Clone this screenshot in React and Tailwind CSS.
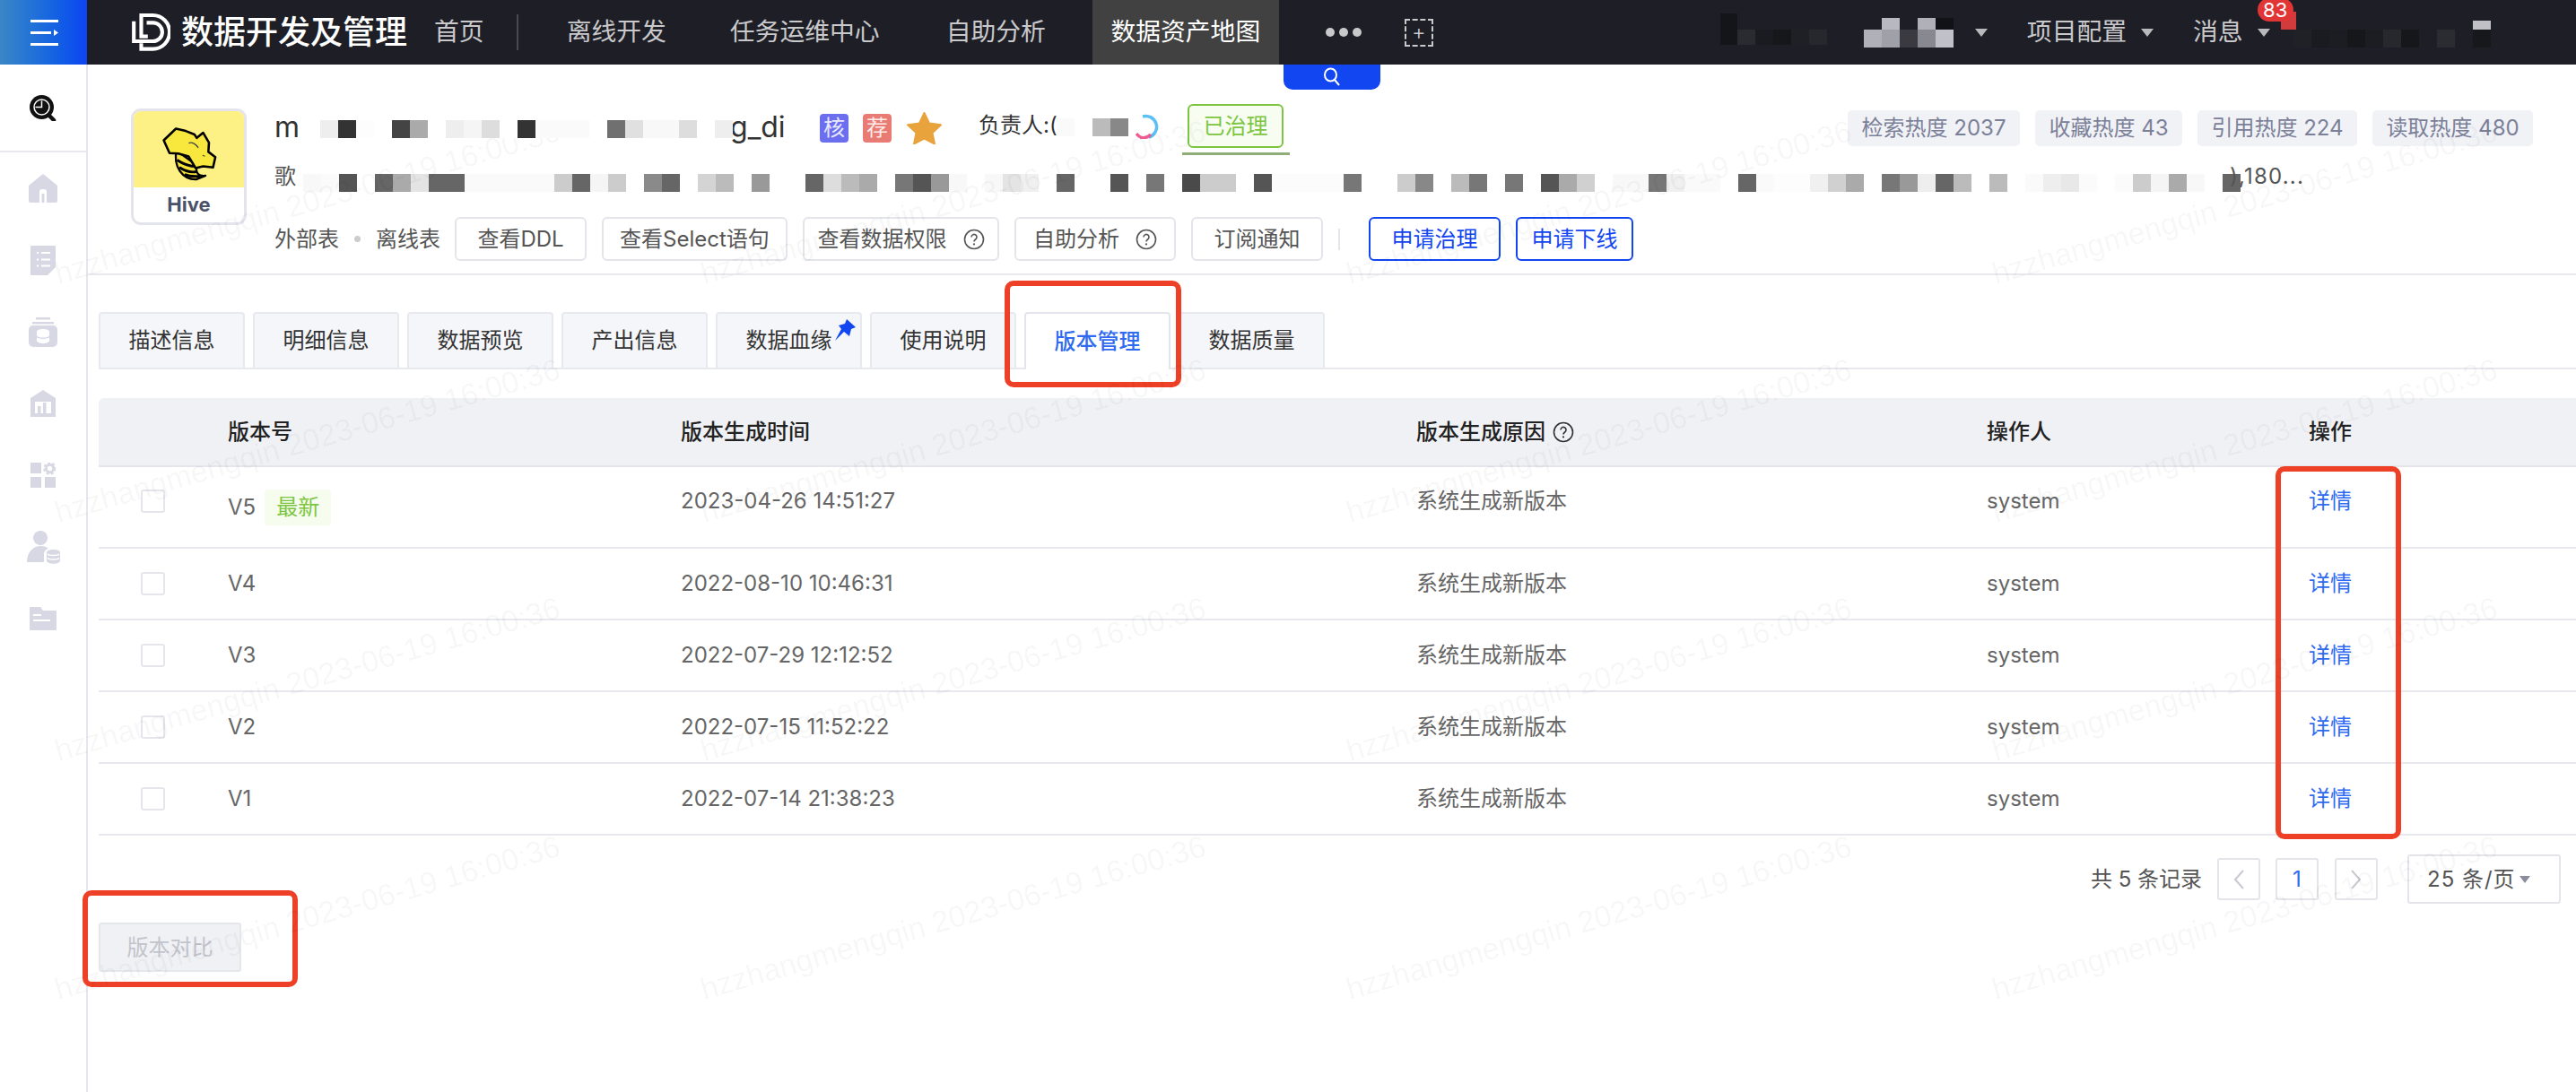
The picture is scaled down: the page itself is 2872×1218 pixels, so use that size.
import React from 'react';

const F = 'font-[Inter,"Noto_Sans_CJK_SC",sans-serif]';

const titleCells = ['#eee','#333','#fdfdfd','#fff','#444','#aaa','#fff','#eee','#f5f5f5','#ddd','#fff','#333','#fafafa','#fafafa','#fafafa','#fff','#707070','#e0e0e0','#f8f8f8','#f8f8f8','#ddd','#fff','#eee'];
const descCells = ['#f8f8f8','#fbfbfb','#555','#fff','#666','#aaa','#e4e4e4','#666','#666','#fafafa','#fafafa','#fafafa','#fafafa','#fafafa','#ccc','#666','#f5f5f5','#ccc','#fff','#8a8a8a','#666','#fff','#d4d4d4','#bbb','#fff','#999','#fff','#fff','#666','#ddd','#bbb','#aaa','#fff','#777','#555','#999','#f8f8f8','#fff','#f8f8f8','#e4e4e4','#f0f0f0','#fff','#666','#fff','#fff','#555','#fff','#777','#fff','#4a4a4a','#ccc','#ccc','#fff','#555','#fcfcfc','#fcfcfc','#fcfcfc','#fcfcfc','#777','#fff','#fff','#ccc','#888','#fff','#bbb','#777','#fff','#777','#fff','#555','#aaa','#d0d0d0','#fff','#f8f8f8','#f8f8f8','#777','#f0f0f0','#fafafa','#fafafa','#fff','#666','#fafafa','#fdfdfd','#fdfdfd','#f0f0f0','#d0d0d0','#aaa','#fff','#777','#999','#eee','#666','#bbb','#fff','#bbb','#fff','#fafafa','#eee','#e8e8e8','#fbfbfb','#fff','#fbfbfb','#ccc','#f5f5f5','#aaa','#f8f8f8','#fff','#666'];

function Cells({ colors, className = '' }) {
  return (
    <div className={`flex shrink-0 ${className}`}>
      {colors.map((c, i) => (
        <div key={i} className="h-[20px] w-[20px]" style={{ backgroundColor: c }} />
      ))}
    </div>
  );
}

function Tri({ className = '' }) {
  return (
    <svg width="14" height="9" viewBox="0 0 14 9" className={className}>
      <path d="M0 0H14L7 9Z" fill="#b9b9bd" />
    </svg>
  );
}

function Help({ color = '#555' }) {
  return (
    <svg width="24" height="24" viewBox="0 0 24 24" fill="none" className="shrink-0">
      <circle cx="12" cy="12" r="10.5" stroke={color} strokeWidth="1.6" />
      <path d="M9 9.5a3 3 0 1 1 4.6 2.5c-1 .7-1.6 1.2-1.6 2.4" stroke={color} strokeWidth="1.6" />
      <circle cx="12" cy="17.4" r="1.1" fill={color} />
    </svg>
  );
}

function Logo() {
  return (
    <svg width="44" height="44" viewBox="45 27 138 137" fill="none" stroke="#fff" strokeWidth="13" className="shrink-0">
      <path d="M81 134V154H122A58 59 0 0 0 122 36H81V110H104" />
      <path d="M55 57V127H122A32 32 0 0 0 122 62H100" />
    </svg>
  );
}

function HiveLogo() {
  return (
    <svg width="64" height="64" viewBox="175 122 198 190" className="shrink-0">
      <path d="M230 208C218 262 250 308 298 307L330 294C308 298 294 286 300 258Z" fill="#f5e23a" stroke="#000" strokeWidth="7" strokeLinejoin="round" />
      <path d="M232 240C256 256 278 262 298 262M240 266C262 280 282 284 300 280M258 290C276 298 292 298 312 296" fill="none" stroke="#000" strokeWidth="9" />
      <path d="M186 172L228 132L262 140L292 152L300 164L322 146L342 180L340 212L364 230L356 266L322 262L296 268L272 228L236 218L206 216Z" fill="#f8e83e" stroke="#000" strokeWidth="8" strokeLinejoin="round" />
      <path d="M272 182C285 176 300 188 305 198M320 224l8 3" fill="none" stroke="#444" strokeWidth="4" />
    </svg>
  );
}

const G = '#d8d8e4';

function IconSearch() {
  return (
    <svg width="30" height="29" viewBox="0 0 30 29" className="shrink-0">
      <circle cx="13.5" cy="13.5" r="13.5" fill="#111" />
      <path d="M21 22l6 6" stroke="#111" strokeWidth="4.5" strokeLinecap="round" />
      <circle cx="13.5" cy="13.5" r="8.5" fill="none" stroke="#fff" strokeWidth="1.5" />
      <path d="M13.5 6.5v7H6.5" fill="none" stroke="#fff" strokeWidth="1.5" />
    </svg>
  );
}
function IconHome() {
  return (
    <svg width="32" height="32" viewBox="0 0 32 32" className="shrink-0">
      <path d="M16 0L32 13V30Q32 32 30 32H2Q0 32 0 30V13Z" fill={G} />
      <path d="M12 32V20Q12 17 15 17H17Q20 17 20 20V32" fill="#fff" />
      <rect x="14.5" y="22" width="3" height="10" rx="1" fill={G} />
    </svg>
  );
}
function IconDoc() {
  return (
    <svg width="28" height="33" viewBox="0 0 28 33" className="shrink-0">
      <path d="M1 0H27Q28 0 28 1V24L19 33H1Q0 33 0 32V1Q0 0 1 0Z" fill={G} />
      <path d="M7 8H9M7 15.5H9M7 22.5H9M12 8H22M12 15.5H22M12 22.5H22" stroke="#fff" strokeWidth="2" />
    </svg>
  );
}
function IconJar() {
  return (
    <svg width="32" height="33" viewBox="0 0 32 33" className="shrink-0">
      <rect x="8" y="0" width="16" height="2.5" fill={G} />
      <rect x="4" y="5" width="24" height="2.5" fill={G} />
      <rect x="0" y="9" width="32" height="24" rx="5" fill={G} />
      <path d="M9 16C9 12 23 12 23 16V26C23 30 9 30 9 26Z" fill="#fff" />
      <path d="M9 21C10 24 22 24 23 21" fill="none" stroke={G} strokeWidth="1.5" />
    </svg>
  );
}
function IconBank() {
  return (
    <svg width="28" height="30" viewBox="0 0 28 30" className="shrink-0">
      <path d="M14 0L28 9V30H0V9Z" fill={G} />
      <rect x="5" y="13" width="18" height="14" fill="#fff" />
      <path d="M8 26V18h3.5v8M14 26V14h3.5v12" fill={G} />
      <rect x="5" y="26" width="18" height="1.5" fill={G} />
    </svg>
  );
}
function IconGrid() {
  return (
    <svg width="28" height="28" viewBox="0 0 28 28" className="shrink-0">
      <rect x="0" y="0" width="12" height="12" fill={G} />
      <rect x="0" y="16" width="12" height="12" fill={G} />
      <rect x="16" y="16" width="12" height="12" fill={G} />
      <circle cx="21.5" cy="6.5" r="4.2" fill="none" stroke={G} strokeWidth="3" />
      <circle cx="21.5" cy="6.5" r="6.3" fill="none" stroke={G} strokeWidth="2" strokeDasharray="3 2.3" />
    </svg>
  );
}
function IconPerson() {
  return (
    <svg width="37" height="37" viewBox="0 0 37 37" className="shrink-0">
      <circle cx="15" cy="8" r="8" fill={G} />
      <path d="M0 35C0 24 7 17 15 17C19 17 22 18 24 20C20 21 19 24 19 27V35Z" fill={G} />
      <path d="M22 24C22 20 37 20 37 24V33C37 38 22 38 22 33Z" fill={G} />
      <path d="M23 26C25 28 34 28 36 26M23 30.5C25 32.5 34 32.5 36 30.5" fill="none" stroke="#fff" strokeWidth="1.5" />
    </svg>
  );
}
function IconFolder() {
  return (
    <svg width="30" height="26" viewBox="0 0 30 26" className="shrink-0">
      <path d="M1 0H12L15 4H29Q30 4 30 5V25Q30 26 29 26H1Q0 26 0 25V1Q0 0 1 0Z" fill={G} />
      <path d="M4 9H13M4 15H23" stroke="#fff" strokeWidth="2" />
    </svg>
  );
}

const sideIcons = [IconHome, IconDoc, IconJar, IconBank, IconGrid, IconPerson, IconFolder];

const tabs = ['描述信息', '明细信息', '数据预览', '产出信息', '数据血缘', '使用说明', '版本管理', '数据质量'];
const rows = [
  ['V5', '2023-04-26 14:51:27'],
  ['V4', '2022-08-10 10:46:31'],
  ['V3', '2022-07-29 12:12:52'],
  ['V2', '2022-07-15 11:52:22'],
  ['V1', '2022-07-14 21:38:23'],
];
const tableCols = 'grid grid-cols-[144px_505px_820px_636px_359px_1fr] items-center';

function Ghost({ children, w }) {
  return (
    <button className={`flex h-[49px] items-center justify-center gap-[18px] rounded-[6px] border-2 border-[#e4e5ea] text-[24px] text-[#555] ${w}`}>
      {children}
    </button>
  );
}
function Heat({ children, w }) {
  return (
    <div className={`flex h-[40px] items-center justify-center rounded-[5px] bg-[#f1f2f6] text-[24px] text-[#7b8099] ${w}`}>{children}</div>
  );
}
function Pager({ children, className = '' }) {
  return (
    <div className={`flex h-[47px] w-[48px] items-center justify-center rounded-[3px] border-2 border-[#e4e5ea] ${className}`}>{children}</div>
  );
}

export default function App() {
  return (
    <div className={`relative h-[1218px] w-[2872px] overflow-hidden bg-white ${F}`}>
      <header className="flex h-[72px] items-stretch bg-[#1e1f26] text-[27.8px] leading-none text-[#c9c9cc]">
        <div className="flex w-[97px] shrink-0 items-center justify-center bg-gradient-to-r from-[#3a86c6] to-[#1043f2]">
          <svg width="32" height="32" viewBox="0 0 32 32">
            <path d="M1 2H32V5H1ZM1 15H24V18H1ZM1 28H32V31H1Z" fill="#fff" />
            <path d="M27 13L32 16.5L27 20Z" fill="#fff" />
          </svg>
        </div>
        <div className="ml-[49px] flex items-center"><Logo /></div>
        <div className="ml-[12px] flex items-center text-[36px] font-medium text-white">数据开发及管理</div>
        <div className="ml-[30px] flex items-center">首页</div>
        <div className="ml-[36px] my-[16px] w-[2px] bg-[#4a4b52]" />
        <div className="ml-[54px] flex items-center">离线开发</div>
        <div className="ml-[71px] flex items-center">任务运维中心</div>
        <div className="ml-[74px] flex items-center">自助分析</div>
        <div className="ml-[52px] flex w-[208px] items-center justify-center bg-[#414141] text-white">数据资产地图</div>
        <div className="ml-[52px] flex items-center gap-[5px]">
          <span className="h-[10px] w-[10px] rounded-full bg-[#c9c9cc]" />
          <span className="h-[10px] w-[10px] rounded-full bg-[#c9c9cc]" />
          <span className="h-[10px] w-[10px] rounded-full bg-[#c9c9cc]" />
        </div>
        <div className="ml-[48px] flex items-center">
          <div className="flex h-[31px] w-[32px] items-center justify-center border-2 border-dashed border-[#c9c9cc] text-[24px] font-light leading-none">+</div>
        </div>
        <div className="ml-[320px] flex items-start pt-[15px]">
          <div className="h-[35px] w-[19px] bg-[#141519]" />
          <div className="mt-[18px] flex">
            <div className="h-[17px] w-[20px] bg-[#2a2b31]" />
            <div className="h-[17px] w-[20px] bg-[#1a1b20]" />
            <div className="h-[17px] w-[20px] bg-[#16171b]" />
            <div className="h-[17px] w-[20px] bg-[#1f2026]" />
            <div className="h-[17px] w-[20px] bg-[#27282e]" />
          </div>
        </div>
        <div className="ml-[41px] flex w-[100px] flex-col justify-start pt-[20px]">
          <div className="flex h-[13px]">
            <div className="h-full w-[20px]" />
            <div className="h-full w-[20px] bg-[#b8b8c0]" />
            <div className="h-full w-[20px]" />
            <div className="h-full w-[20px] bg-[#b0b0b8]" />
            <div className="h-full w-[20px] bg-[#111216]" />
          </div>
          <div className="flex h-[20px]">
            <div className="h-full w-[20px] bg-[#b0b0b8]" />
            <div className="h-full w-[20px] bg-[#a0a0a8]" />
            <div className="h-full w-[20px] bg-[#3a3a40]" />
            <div className="h-full w-[20px] bg-[#888890]" />
            <div className="h-full w-[20px] bg-[#c0c0c8]" />
          </div>
        </div>
        <div className="ml-[24px] flex items-center"><Tri /></div>
        <div className="ml-[44px] flex items-center">项目配置</div>
        <div className="ml-[16px] flex items-center"><Tri /></div>
        <div className="ml-[44px] flex items-center">消息</div>
        <div className="relative ml-[16px] flex items-center">
          <Tri />
          <div className="absolute left-[26px] top-[13px] h-[20px] w-[17px] bg-[#d23b3b]" />
          <div className="absolute left-[0px] top-[-2px] flex h-[26px] w-[40px] items-center justify-center rounded-full bg-[#e23636] text-[22px] text-white">83</div>
        </div>
        <div className="ml-[26px] flex items-start pt-[33px]">
          <div className="h-[20px] w-[20px] bg-[#202127]" />
          <div className="h-[20px] w-[20px] bg-[#1a1b20]" />
          <div className="h-[20px] w-[20px] bg-[#1c1d22]" />
          <div className="h-[20px] w-[20px] bg-[#16171b]" />
          <div className="h-[20px] w-[20px] bg-[#1c1d22]" />
          <div className="h-[20px] w-[20px] bg-[#27282e]" />
          <div className="h-[20px] w-[20px] bg-[#16171b]" />
          <div className="h-[20px] w-[20px] bg-[#1e1f26]" />
          <div className="h-[20px] w-[20px] bg-[#2b2c32]" />
          <div className="h-[20px] w-[20px] bg-[#1e1f26]" />
          <div className="relative h-[20px] w-[20px] bg-[#17181c]">
            <div className="absolute top-[-10px] h-[10px] w-[20px] bg-[#c0c0c6]" />
          </div>
        </div>
      </header>

      <div className="flex h-[1146px]">
        <aside className="w-[98px] shrink-0 border-r-2 border-[#e6e6ec]">
          <div className="flex h-[98px] items-start justify-center border-b-2 border-[#e8e8ee] pt-[34px]">
            <IconSearch />
          </div>
          {sideIcons.map((Ic, i) => (
            <div key={i} className="flex h-[80px] items-center justify-center"><Ic /></div>
          ))}
        </aside>

        <main className="relative min-w-0 flex-1">
          <div className="absolute left-[1333px] top-0 flex h-[28px] w-[108px] items-center justify-center rounded-b-[10px] bg-[#1246f0]">
            <svg width="20" height="22" viewBox="0 0 20 22" fill="none" stroke="#fff" strokeWidth="2">
              <ellipse cx="8.5" cy="8.5" rx="6.5" ry="7" />
              <path d="M13 14l5 6" />
            </svg>
          </div>

          <section className="flex h-[235px] border-b-2 border-[#e8e8ee] pl-[48px] pr-[48px] pt-[44px]">
            <div className="mt-[5px] flex h-[130px] w-[129px] shrink-0 flex-col overflow-hidden rounded-[11px] border-[3px] border-[#e4e5ec]">
              <div className="flex h-[85px] items-center justify-center bg-[#fdf085] pt-[8px]"><HiveLogo /></div>
              <div className="flex flex-1 items-center justify-center text-[22px] font-bold text-[#4b5268]">Hive</div>
            </div>
            <div className="ml-[31px] min-w-0 flex-1">
              <div className="flex h-[49px] items-start">
                <div className="flex h-[49px] w-[608px] shrink-0 items-center text-[32px] leading-none text-[#333]">
                  <span className="w-[51px] shrink-0 pt-[3px]">m</span>
                  <Cells colors={titleCells} className="relative z-10 mt-[7px]" />
                  <span className="ml-[-3px] pt-[3px]">g_di</span>
                </div>
                <div className="mt-[11px] flex h-[32px] w-[32px] shrink-0 items-center justify-center rounded-[4px] bg-[#6c6ef0] text-[24px] leading-none text-[#e8e8ff]">核</div>
                <div className="ml-[16px] mt-[11px] flex h-[32px] w-[32px] shrink-0 items-center justify-center rounded-[4px] bg-[#e87b73] text-[24px] leading-none text-[#ffecea]">荐</div>
                <svg width="39" height="36" viewBox="0 0 39 36" className="ml-[17px] mt-[9px] shrink-0">
                  <path d="M19.5 1L25 12.5L38 14.2L28.5 23.2L31 35.5L19.5 29.5L8 35.5L10.5 23.2L1 14.2L14 12.5Z" fill="#e8a33c" stroke="#e8a33c" strokeWidth="2" strokeLinejoin="round" />
                </svg>
                <div className="ml-[41px] mt-[10px] flex shrink-0 items-center text-[24px] leading-[28px] text-[#333]">
                  <span className="w-[87px] overflow-hidden whitespace-nowrap">负责人:(</span>
                  <Cells colors={['#fafafa', '#fff', '#bbb', '#888']} className="mt-[3px]" />
                </div>
                <svg width="28" height="28" viewBox="0 0 28 28" fill="none" className="ml-[8px] mt-[11px] shrink-0">
                  <path d="M8 3A12 12 0 1 1 15 26" stroke="#5cc0f5" strokeWidth="3.5" />
                  <path d="M1 22C5 28 12 28 17 23" stroke="#ee5c92" strokeWidth="3.5" />
                </svg>
                <div className="relative ml-[30px] flex h-[49px] w-[107px] shrink-0 items-center justify-center rounded-[6px] border-2 border-[#7cc540] bg-[#f7fdf0] text-[24px] text-[#7cc540]">
                  已治理
                  <div className="absolute left-[-8px] top-[52px] h-[3px] w-[120px] bg-[#8fae7a]" />
                </div>
                <div className="ml-auto mt-[7px] flex gap-[17px]">
                  <Heat w="w-[192px]">检索热度 2037</Heat>
                  <Heat w="w-[164px]">收藏热度 43</Heat>
                  <Heat w="w-[178px]">引用热度 224</Heat>
                  <Heat w="w-[179px]">读取热度 480</Heat>
                </div>
              </div>
              <div className="mt-[20px] flex h-[30px] items-start text-[24px] leading-[24px] text-[#555]">
                <span className="w-[32px] shrink-0">歌</span>
                <Cells colors={descCells} className="mt-[9px]" />
                <span className="ml-[-12px] tracking-[1.2px]">),180...</span>
              </div>
              <div className="mt-[27px] flex h-[49px] items-center text-[24px] text-[#555]">
                <span>外部表</span>
                <span className="mx-[17px] h-[7px] w-[7px] rounded-full bg-[#ccc]" />
                <span>离线表</span>
                <div className="ml-[16px] flex items-center gap-[17px]">
                  <Ghost w="w-[147px]">查看DDL</Ghost>
                  <Ghost w="w-[207px]">查看Select语句</Ghost>
                  <Ghost w="w-[219px]">查看数据权限<Help /></Ghost>
                  <Ghost w="w-[180px]">自助分析<Help /></Ghost>
                  <Ghost w="w-[147px]">订阅通知</Ghost>
                </div>
                <div className="ml-[17px] h-[24px] w-[2px] bg-[#e4e5ea]" />
                <button className="ml-[32px] flex h-[49px] w-[147px] items-center justify-center rounded-[6px] border-2 border-[#1246f0] text-[24px] text-[#1246f0]">申请治理</button>
                <button className="ml-[17px] flex h-[49px] w-[131px] items-center justify-center rounded-[6px] border-2 border-[#1246f0] text-[24px] text-[#1246f0]">申请下线</button>
              </div>
            </div>
          </section>

          <div className="pl-[12px]">
            <div className="mt-[41px] flex h-[64px] gap-[9px] border-b-2 border-[#e8e9ef]">
              {tabs.map((t, i) => (
                <div
                  key={t}
                  className={
                    i === 6
                      ? 'relative flex h-[64px] w-[163px] items-center justify-center rounded-t-[4px] border-2 border-b-0 border-[#e4e5ec] bg-white text-[24px] font-medium text-[#2f6bf0]'
                      : 'relative flex h-[62px] w-[163px] items-center justify-center rounded-t-[4px] border-2 border-b-0 border-[#e8e9ef] bg-[#f5f6fa] text-[24px] text-[#333]'
                  }
                >
                  {t}
                  {i === 4 && (
                    <svg width="26" height="26" viewBox="0 0 26 26" className="absolute right-[4px] top-[6px]">
                      <path d="M15 0L25 9L20 11L18 19L12 14L2 24L9 11L6 7L13 5Z" fill="#1246f0" />
                    </svg>
                  )}
                </div>
              ))}
            </div>

            <div className="mt-[32px]">
              <div className={`${tableCols} h-[77px] rounded-tl-[6px] border-b-2 border-[#e5e6ec] bg-[#f0f1f5] text-[24px] font-medium text-[#222]`}>
                <div />
                <div>版本号</div>
                <div>版本生成时间</div>
                <div className="flex items-center gap-[8px]">版本生成原因<Help color="#333" /></div>
                <div>操作人</div>
                <div>操作</div>
              </div>
              {rows.map(([v, time], i) => (
                <div
                  key={v}
                  className={`${tableCols} border-b-2 border-[#e8e9ef] text-[24px] text-[#666] ${i === 0 ? 'h-[91px] pb-[14px]' : 'h-[80px]'}`}
                >
                  <div className="pl-[47px]">
                    <div className="h-[26px] w-[27px] rounded-[3px] border-2 border-[#e5e5ec]" />
                  </div>
                  <div className={`flex items-center gap-[10px] ${i === 0 ? 'mt-[14px]' : ''}`}>
                    {v}
                    {i === 0 && <span className="flex h-[40px] w-[74px] items-center justify-center rounded-[3px] bg-[#f6fdee] text-[#7cc540]">最新</span>}
                  </div>
                  <div>{time}</div>
                  <div>系统生成新版本</div>
                  <div>system</div>
                  <div className="text-[#2f6bf0]">详情</div>
                </div>
              ))}
            </div>

            <div className="mt-[21px] flex h-[55px] items-center justify-end pr-[17px] text-[24px] text-[#555]">
              <span>共 5 条记录</span>
              <Pager className="ml-[17px]">
                <svg width="14" height="24" viewBox="0 0 14 24" fill="none" stroke="#c8c9d0" strokeWidth="2"><path d="M12 2L3 12L12 22" /></svg>
              </Pager>
              <Pager className="ml-[17px] text-[#2f6bf0]">1</Pager>
              <Pager className="ml-[18px]">
                <svg width="14" height="24" viewBox="0 0 14 24" fill="none" stroke="#c8c9d0" strokeWidth="2"><path d="M2 2L11 12L2 22" /></svg>
              </Pager>
              <div className="ml-[33px] flex h-[55px] w-[171px] items-center gap-[4px] rounded-[3px] border-2 border-[#e4e5ea] pl-[20px] tracking-[1px]">
                25 条/页
                <svg width="12" height="8" viewBox="0 0 12 8"><path d="M0 0H12L6 8Z" fill="#8b8d9c" /></svg>
              </div>
            </div>

            <button className="mt-[21px] flex h-[55px] w-[159px] items-center justify-center rounded-[3px] border-2 border-[#e6e7ec] bg-[#f0f1f4] text-[24px] text-[#c2c4cc]">版本对比</button>
          </div>
        </main>
      </div>

      <div className="pointer-events-none absolute left-[1120px] top-[313px] h-[119px] w-[197px] rounded-[10px] border-[6px] border-[#ee4026]" />
      <div className="pointer-events-none absolute left-[2537px] top-[520px] h-[416px] w-[140px] rounded-[10px] border-[6px] border-[#ee4026]" />
      <div className="pointer-events-none absolute left-[92px] top-[993px] h-[108px] w-[240px] rounded-[10px] border-[6px] border-[#ee4026]" />

      <div className="pointer-events-none absolute inset-0 grid grid-cols-[repeat(4,720px)] auto-rows-[266px] pl-[66px] pt-[289px]">
        {Array.from({ length: 16 }).map((_, i) => (
          <div key={i} className="origin-bottom-left -rotate-[16deg] self-start whitespace-nowrap font-['Liberation_Sans',sans-serif] text-[34px] leading-[32px] text-black/[0.045]">
            hzzhangmengqin 2023-06-19 16:00:36
          </div>
        ))}
      </div>
    </div>
  );
}
